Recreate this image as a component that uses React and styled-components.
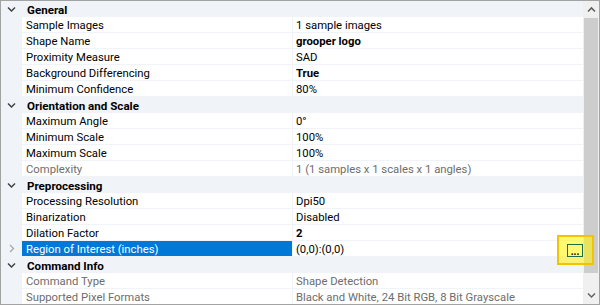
import React from 'react';
import styled, { createGlobalStyle } from 'styled-components'

const GlobalStyle = createGlobalStyle`
  html, body {
    margin: 0;
    padding: 0;
    background: #ffffff;
  }
  body {
    font-family: Roboto, "Liberation Sans", Arial, sans-serif;
    font-size: 11.3px;
    color: #000000;
  }
`

const LINE = '#f0f3f8'

const Frame = styled.div`
  position: relative;
  box-sizing: border-box;
  width: 600px;
  height: 305px;
  border: 1px solid #a3a3a3;
  display: flex;
  overflow: hidden;
  background: #ffffff;
`

const Grid = styled.div`
  flex: 1;
  display: flex;
  flex-direction: column;
  overflow: hidden;
`

const CategoryRow = styled.div`
  flex: 0 0 16px;
  display: flex;
  align-items: center;
  background: ${LINE};
`

const Gutter = styled.div`
  width: 21px;
  height: 100%;
  display: flex;
  align-items: center;
  justify-content: center;
  flex-shrink: 0;
`

const CategoryLabel = styled.span`
  font-weight: bold;
  font-size: 11.6px;
  padding-left: 5px;
  padding-top: 1px;
`

const Row = styled.div`
  flex: 0 0 16px;
  box-sizing: border-box;
  display: grid;
  grid-template-columns: 21px 270px 1fr;
  padding-bottom: 1px;
  background: ${LINE};
`

const NameCell = styled.div`
  display: flex;
  align-items: center;
  padding-left: 4px;
  padding-top: 1px;
  white-space: nowrap;
  overflow: hidden;
  background: ${p => (p.$selected ? '#0078d7' : '#ffffff')};
  color: ${p => (p.$selected ? '#ffffff' : p.$readOnly ? '#6d6d6d' : '#000000')};
`

const ValueCell = styled.div`
  display: flex;
  align-items: center;
  margin-left: 1px;
  padding-left: 3px;
  padding-top: 1px;
  white-space: nowrap;
  overflow: hidden;
  background: #ffffff;
  font-weight: ${p => (p.$bold ? 'bold' : 'normal')};
  color: ${p => (p.$readOnly ? '#6d6d6d' : '#000000')};
`

const ScrollBar = styled.div`
  width: 16px;
  flex-shrink: 0;
  display: flex;
  flex-direction: column;
  background: #f0f0f0;
`

const ArrowButton = styled.div`
  height: 17px;
  display: flex;
  align-items: center;
  justify-content: center;
  flex-shrink: 0;
`

const Thumb = styled.div`
  height: 255px;
  margin: 0 1px;
  background: #cdcdcd;
`

const Track = styled.div`
  flex: 1;
`

const Highlight = styled.div`
  position: absolute;
  left: 556px;
  top: 234px;
  width: 37px;
  height: 30px;
  box-sizing: border-box;
  border: 2px solid #f0c400;
  background: rgba(255, 244, 0, 0.55);
  display: flex;
  align-items: center;
  justify-content: center;
`

const EllipsisButton = styled.div`
  width: 16px;
  height: 13px;
  box-sizing: border-box;
  border: 1px solid #1c6b4c;
  display: flex;
  align-items: flex-end;
  justify-content: center;
  font-size: 10px;
  line-height: 9px;
  font-weight: bold;
  color: #000;
  margin-left: -1px;
  margin-top: 1px;
`

const Chevron = ({ dir = 'down', color = '#3c3c3c' }) => (
  <svg width="9" height="9" viewBox="0 0 9 9">
    {dir === 'down' && <path d="M1 2.5 L4.5 6 L8 2.5" fill="none" stroke={color} strokeWidth="1.4" />}
    {dir === 'right' && <path d="M3 1 L6.5 4.5 L3 8" fill="none" stroke={color} strokeWidth="1.3" />}
    {dir === 'up' && <path d="M1 6.5 L4.5 3 L8 6.5" fill="none" stroke={color} strokeWidth="1.6" />}
  </svg>
)

const sections = [
  {
    title: 'General',
    rows: [
      { name: 'Sample Images', value: '1 sample images' },
      { name: 'Shape Name', value: 'grooper logo', bold: true },
      { name: 'Proximity Measure', value: 'SAD' },
      { name: 'Background Differencing', value: 'True', bold: true },
      { name: 'Minimum Confidence', value: '80%' },
    ],
  },
  {
    title: 'Orientation and Scale',
    rows: [
      { name: 'Maximum Angle', value: '0°' },
      { name: 'Minimum Scale', value: '100%' },
      { name: 'Maximum Scale', value: '100%' },
      { name: 'Complexity', value: '1 (1 samples x 1 scales x 1 angles)', readOnly: true },
    ],
  },
  {
    title: 'Preprocessing',
    rows: [
      { name: 'Processing Resolution', value: 'Dpi50' },
      { name: 'Binarization', value: 'Disabled' },
      { name: 'Dilation Factor', value: '2', bold: true },
      { name: 'Region of Interest (inches)', value: '(0,0):(0,0)', selected: true, expandable: true },
    ],
  },
  {
    title: 'Command Info',
    rows: [
      { name: 'Command Type', value: 'Shape Detection', readOnly: true },
      { name: 'Supported Pixel Formats', value: 'Black and White, 24 Bit RGB, 8 Bit Grayscale', readOnly: true },
    ],
  },
]

export default function App() {
  return (
    <>
      <GlobalStyle />
      <Frame>
        <Grid>
          {sections.map(section => (
            <React.Fragment key={section.title}>
              <CategoryRow>
                <Gutter><Chevron dir="down" /></Gutter>
                <CategoryLabel>{section.title}</CategoryLabel>
              </CategoryRow>
              {section.rows.map(row => (
                <Row key={row.name}>
                  <Gutter>{row.expandable && <Chevron dir="right" color="#a8a8a8" />}</Gutter>
                  <NameCell $selected={row.selected} $readOnly={row.readOnly}>{row.name}</NameCell>
                  <ValueCell $bold={row.bold} $readOnly={row.readOnly}>{row.value}</ValueCell>
                </Row>
              ))}
            </React.Fragment>
          ))}
        </Grid>
        <ScrollBar>
          <ArrowButton><Chevron dir="up" color="#606060" /></ArrowButton>
          <Thumb />
          <Track />
          <ArrowButton><Chevron dir="down" color="#606060" /></ArrowButton>
        </ScrollBar>
        <Highlight>
          <EllipsisButton>...</EllipsisButton>
        </Highlight>
      </Frame>
    </>
  )
}
